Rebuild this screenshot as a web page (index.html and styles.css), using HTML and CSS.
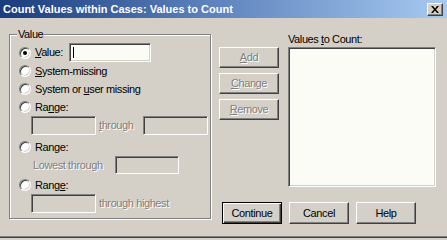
FILE: index.html
```html
<!DOCTYPE html>
<html>
<head>
<meta charset="utf-8">
<link rel="stylesheet" href="styles.css">
</head>
<body>
<div class="window">
  <div class="titlebar">
    <span class="title">Count Values within Cases: Values to Count</span>
    <span class="close"><svg width="8" height="7" viewBox="0 0 8 7"><path d="M0 0h2l2 2.5L6 0h2L5 3.5 8 7H6L4 4.5 2 7H0l3-3.5z" fill="#000"/></svg></span>
  </div>
  <div class="content">
    <fieldset class="group">
      <legend class="legend">Value</legend>
      <div class="row row-value">
        <span class="radio checked"></span>
        <span class="label"><u>V</u>alue:</span>
        <span class="field field-value"><span class="caret"></span></span>
      </div>
      <div class="row row-opt">
        <span class="radio"></span>
        <span class="label"><u>S</u>ystem-missing</span>
      </div>
      <div class="row row-opt">
        <span class="radio"></span>
        <span class="label">System or <u>u</u>ser missing</span>
      </div>
      <div class="row row-opt">
        <span class="radio"></span>
        <span class="label">Ra<u>n</u>ge:</span>
      </div>
      <div class="row row-sub">
        <span class="field field-range disabled"></span>
        <span class="label dis mid"><u>t</u>hrough</span>
        <span class="field field-range disabled"></span>
      </div>
      <div class="row row-opt row-r2">
        <span class="radio"></span>
        <span class="label">Ran<u>g</u>e:</span>
      </div>
      <div class="row row-sub row-low">
        <span class="label dis lowest">Lowest through</span>
        <span class="field field-low disabled"></span>
      </div>
      <div class="row row-opt row-r3">
        <span class="radio"></span>
        <span class="label">Rang<u>e</u>:</span>
      </div>
      <div class="row row-sub row-high">
        <span class="field field-range disabled"></span>
        <span class="label dis mid">through highest</span>
      </div>
    </fieldset>
    <div class="side">
      <div class="side-top">
        <div class="actions">
          <span class="btn dis-btn"><span class="dis"><u>A</u>dd</span></span>
          <span class="btn dis-btn"><span class="dis"><u>C</u>hange</span></span>
          <span class="btn dis-btn"><span class="dis"><u>R</u>emove</span></span>
        </div>
        <div class="list-col">
          <div class="list-label">Values <u>t</u>o Count:</div>
          <div class="listbox"></div>
        </div>
      </div>
      <div class="side-bottom">
        <span class="btn default">Continue</span>
        <span class="btn">Cancel</span>
        <span class="btn">Help</span>
      </div>
    </div>
  </div>
</div>
</body>
</html>
```
FILE: styles.css
```css
* { box-sizing: border-box; }
html, body { margin: 0; padding: 0; }
body {
  background: #d4d0c8;
  font-family: "Liberation Sans", Arial, sans-serif;
  font-size: 11px;
  letter-spacing: -0.4px;
  color: #000;
}
u { text-decoration: underline; text-underline-offset: 1px; }
.window {
  width: 447px;
  height: 238px;
  background: #d4d0c8;
  border-bottom: 1px solid #404040;
  box-shadow: inset 0 -1px 0 #808080;
  overflow: hidden;
}
.titlebar {
  height: 18px;
  display: flex;
  align-items: center;
  justify-content: space-between;
  padding: 0 4px 0 3px;
  background: linear-gradient(to right, #1a3b7c 0%, #5a7fba 45%, #a6caf0 100%);
}
.title {
  color: #fff;
  font-weight: bold;
  letter-spacing: 0;
  font-size: 11px;
}
.close {
  width: 16px;
  height: 13px;
  background: #d4d0c8;
  border: 1px solid;
  border-color: #fff #404040 #404040 #fff;
  box-shadow: inset -1px -1px 0 #808080;
  display: flex;
  align-items: center;
  justify-content: center;
  margin-top: 1px;
}
.close svg { display: block; }
.content {
  display: flex;
  padding: 10px 0 0 9px;
}
.group {
  margin: 0;
  width: 202px;
  height: 191px;
  padding: 2px 0 0 9px;
  border: 1px solid #808080;
  box-shadow: inset 1px 1px 0 #fff, 1px 1px 0 #fff;
  min-width: 0;
}
.legend {
  padding: 0 1px;
  margin-left: -2px;
  line-height: 13px;
  background: #d4d0c8;
}
.row {
  display: flex;
  align-items: center;
}
.row-value { height: 19px; }
.row-opt { height: 18px; }
.row-r2 { margin-top: 3px; }
.row-r3 { margin-top: 2px; }
.row-sub { height: 19px; padding-left: 12px; }
.row-low { padding-left: 14px; height: 18px; }
.radio {
  width: 12px;
  height: 12px;
  border-radius: 50%;
  border: 1px solid;
  border-color: #808080 #fff #fff #808080;
  box-shadow: inset 1px 1px 0 #404040, inset -1px -1px 0 #d4d0c8;
  background: #fff;
  flex: none;
  display: flex;
  align-items: center;
  justify-content: center;
}
.radio.checked::after {
  content: "";
  width: 4px;
  height: 4px;
  border-radius: 50%;
  background: #000;
}
.row .radio + .label { margin-left: 4px; }
.label { white-space: nowrap; line-height: 13px; }
.field {
  display: flex;
  align-items: center;
  border: 1px solid;
  border-color: #808080 #fff #fff #808080;
  box-shadow: inset 1px 1px 0 #404040, inset -1px -1px 0 #d4d0c8;
  background: #fcfcf6;
  flex: none;
}
.field.disabled { background: #d4d0c8; }
.field-value { width: 82px; height: 19px; margin-left: 6px; }
.caret {
  width: 1px;
  height: 11px;
  background: #000;
  margin-left: 3px;
}
.field-range { width: 65px; height: 19px; }
.field-low { width: 64px; height: 18px; }
.mid { width: 47px; padding-left: 3px; }
.row-high .mid { width: auto; }
.lowest { width: 82px; }
.dis {
  color: #808080;
  text-shadow: 1px 1px 0 #fff;
}
.side {
  margin-left: 8px;
  display: flex;
  flex-direction: column;
}
.side-top { display: flex; }
.actions {
  display: flex;
  flex-direction: column;
  gap: 5px;
  padding-top: 19px;
}
.btn {
  width: 60px;
  height: 21px;
  display: flex;
  align-items: center;
  justify-content: center;
  border: 1px solid;
  border-color: #fff #404040 #404040 #fff;
  box-shadow: inset -1px -1px 0 #808080;
  background: #d4d0c8;
  line-height: 13px;
}
.list-col { margin-left: 9px; padding-top: 5px; }
.list-label { line-height: 13px; height: 14px; }
.listbox {
  width: 148px;
  height: 140px;
  border: 1px solid;
  border-color: #808080 #fff #fff #808080;
  box-shadow: inset 1px 1px 0 #404040, inset -1px -1px 0 #d4d0c8;
  background: #fcfcf6;
}
.side-bottom {
  display: flex;
  gap: 7px;
  padding-left: 3px;
  margin-top: 15px;
}
.side-bottom .btn { height: 22px; }
.btn.default {
  border: 1px solid #000;
  box-shadow: inset 1px 1px 0 #fff, inset -1px -1px 0 #404040, inset -2px -2px 0 #808080;
}
```
